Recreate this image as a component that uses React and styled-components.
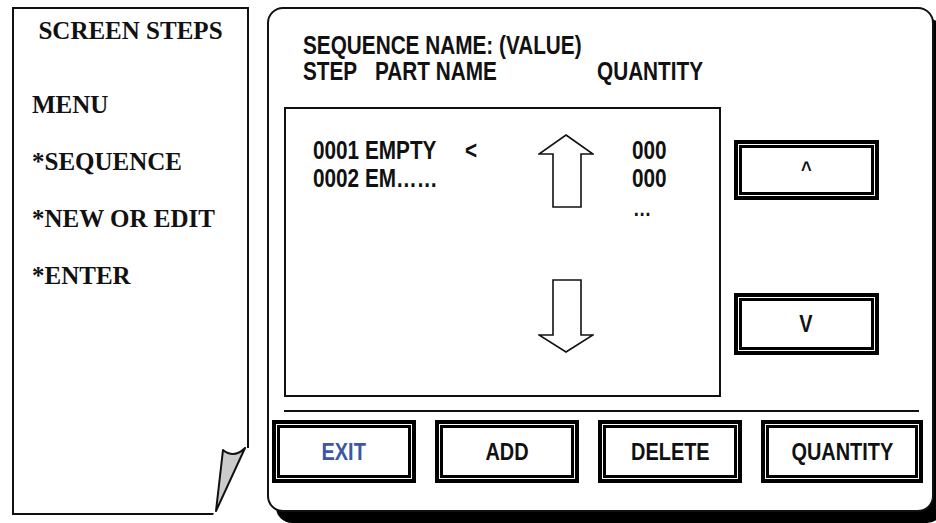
import React from "react"
import styled, { createGlobalStyle } from "styled-components"

const Global = createGlobalStyle`
  html, body {
    margin: 0;
    padding: 0;
    background: #fff;
    overflow: hidden;
  }
`

const sans = `"Liberation Sans", Arial, sans-serif`
const serif = `"Liberation Serif", "Times New Roman", serif`

const Screen = styled.div`
  display: flex;
  align-items: flex-start;
  gap: 18px;
  padding: 7px 0 0 12px;
  width: 936px;
  height: 523px;
  box-sizing: border-box;
`

/* ---------- left sheet ---------- */

const Sheet = styled.div`
  position: relative;
  width: 237px;
  height: 508px;
  box-sizing: border-box;
  border: 2px solid #111;
  padding: 7px 0 0 18px;
  font-family: ${serif};
  font-weight: bold;
  font-size: 25px;
  line-height: 30px;
  color: #111;
`

const SheetTitle = styled.div`
  text-align: center;
  margin: 0 0 44px -18px;
`

const Step = styled.div`
  margin-bottom: 27px;
`

const Curl = styled.svg`
  position: absolute;
  right: -2px;
  bottom: -2px;
  width: 42px;
  height: 74px;
`

/* ---------- right panel ---------- */

// condensed bold sans (the original uses a narrow face)
const Narrow = styled.span`
  display: inline-block;
  white-space: pre;
  transform: scaleX(0.83);
  transform-origin: ${(p) => (p.$center ? "center" : "left")} center;
`

const Panel = styled.div`
  width: 667px;
  height: 505px;
  box-sizing: border-box;
  border: 2px solid #111;
  border-radius: 16px;
  box-shadow: 9px 11px 0 #000;
  background: #fff;
  display: flex;
  flex-direction: column;
  font-family: ${sans};
  font-weight: bold;
  font-size: 25px;
  color: #111;
`

const Header = styled.div`
  padding: 23px 0 0 34px;
  line-height: 26px;
`

const HeadRow = styled.div`
  display: grid;
  grid-template-columns: 72px 222px auto;
  white-space: pre;
`

const Middle = styled.div`
  display: flex;
  align-items: flex-start;
  gap: 13px;
  margin: 23px 0 0 15px;
`

const ListBox = styled.div`
  width: 437px;
  height: 290px;
  box-sizing: border-box;
  border: 2px solid #111;
  display: flex;
  align-items: flex-start;
  padding: 25px 0 0 27px;
  line-height: 28px;
`

const Col = styled.div`
  width: ${(p) => p.$w}px;
  padding-top: ${(p) => p.$top || 0}px;
  flex-shrink: 0;
  white-space: pre;
`

const ArrowCol = styled.div`
  width: 56px;
  flex-shrink: 0;
  display: flex;
  flex-direction: column;
  gap: 71px;
`

const Dots = styled.div`
  margin-top: 3px;
  padding-left: 1px;
  font-size: 22px;
`

const SideCol = styled.div`
  display: flex;
  flex-direction: column;
  padding-top: 33px;
  gap: 93px;
`

const FrameButton = styled.div`
  width: ${(p) => p.$w}px;
  height: ${(p) => p.$h}px;
  box-sizing: border-box;
  border: 4px solid #000;
  box-shadow: inset 0 0 0 1px #fff, inset 0 0 0 4px #000;
  display: flex;
  align-items: center;
  justify-content: center;
  color: ${(p) => p.$color || "#111"};
  font-size: ${(p) => p.$size || 24}px;
`

const Rule = styled.div`
  height: 2px;
  background: #111;
  margin: 13px 13px 0 15px;
`

const ButtonRow = styled.div`
  display: flex;
  gap: 19px;
  margin: 8px 0 0 3px;
`

const UpArrow = () => (
  <svg width="56" height="74" viewBox="0 0 56 74">
    <polygon
      points="28,1 55,20 43,20 43,73 15,73 15,20 1,20"
      fill="#fff"
      stroke="#111"
      strokeWidth="1.6"
    />
  </svg>
)

const DownArrow = () => (
  <svg width="56" height="74" viewBox="0 0 56 74">
    <polygon
      points="15,1 43,1 43,56 55,56 28,73 1,56 15,56"
      fill="#fff"
      stroke="#111"
      strokeWidth="1.6"
    />
  </svg>
)

const Btn = ({ children, ...rest }) => (
  <FrameButton {...rest}>
    <Narrow $center>{children}</Narrow>
  </FrameButton>
)

export default function App() {
  return (
    <>
      <Global />
      <Screen>
        <Sheet>
          <SheetTitle>SCREEN STEPS</SheetTitle>
          <Step>MENU</Step>
          <Step>*SEQUENCE</Step>
          <Step>*NEW OR EDIT</Step>
          <Step>*ENTER</Step>
          <Curl viewBox="0 0 42 74">
            <polygon points="38,7 42,7 42,74 6,74" fill="#fff" />
            <path
              d="M38,7 Q27,18 16,9 L9,70 Z"
              fill="#cbcbcb"
              stroke="#111"
              strokeWidth="2"
              strokeLinejoin="round"
            />
          </Curl>
        </Sheet>

        <Panel>
          <Header>
            <div>
              <Narrow>SEQUENCE NAME: (VALUE)</Narrow>
            </div>
            <HeadRow>
              <Narrow>STEP</Narrow>
              <Narrow>PART NAME</Narrow>
              <Narrow>QUANTITY</Narrow>
            </HeadRow>
          </Header>

          <Middle>
            <ListBox>
              <Col $w={152} $top={2}>
                <div><Narrow>0001 EMPTY</Narrow></div>
                <div><Narrow>0002 EM……</Narrow></div>
              </Col>
              <Col $w={73} $top={2}>
                <div><Narrow>&lt;</Narrow></div>
              </Col>
              <ArrowCol>
                <UpArrow />
                <DownArrow />
              </ArrowCol>
              <Col $w={38} />
              <Col $w={60} $top={2}>
                <div><Narrow>000</Narrow></div>
                <div><Narrow>000</Narrow></div>
                <Dots>
                  <Narrow>…</Narrow>
                </Dots>
              </Col>
            </ListBox>
            <SideCol>
              <Btn $w={145} $h={60} $size={22}>^</Btn>
              <Btn $w={145} $h={62}>V</Btn>
            </SideCol>
          </Middle>

          <Rule />

          <ButtonRow>
            <Btn $w={144} $h={63} $color="#3b58a8">EXIT</Btn>
            <Btn $w={144} $h={63}>ADD</Btn>
            <Btn $w={144} $h={63}>DELETE</Btn>
            <Btn $w={162} $h={63}>QUANTITY</Btn>
          </ButtonRow>
        </Panel>
      </Screen>
    </>
  )
}
